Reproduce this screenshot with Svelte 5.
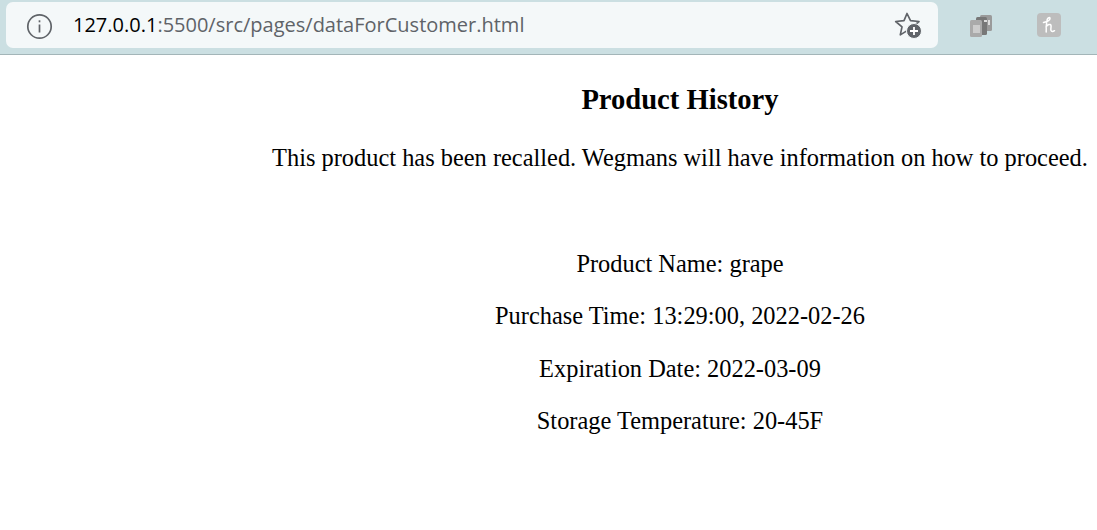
<script>
  const details = [
    'Product Name: grape',
    'Purchase Time: 13:29:00, 2022-02-26',
    'Expiration Date: 2022-03-09',
    'Storage Temperature: 20-45F'
  ];
</script>

<div class="toolbar">
  <div class="omnibox">
    <svg class="info" width="27" height="27" viewBox="0 0 27 27" fill="none" stroke="#5f6368" stroke-width="1.7">
      <circle cx="13.500" cy="13.500" r="11.700" />
      <path d="M13.500 11.500v8" />
      <path d="M13.500 7.300v2" />
    </svg>
    <div class="url"><span class="host">127.0.0.1</span>:5500/src/pages/dataForCustomer.html</div>
    <svg class="star" width="28" height="30" viewBox="0 0 28 30">
      <path d="M13 3.500l3.500 7.200 8.500.8-6.200 5.300 1.800 7.700-7.400-3.900-6.900 4.300 1.700-8.100-6.300-5.300 8.300-.8z" fill="none" stroke="#5f6368" stroke-width="1.700" stroke-linejoin="round" />
      <circle cx="20" cy="21" r="7.500" fill="#5f6368" stroke="#f4f8f9" stroke-width="1" />
      <path d="M16 21h8M20 17v8" stroke="#fff" stroke-width="1.800" />
    </svg>
  </div>
  <div class="extensions">
    <svg class="ext docs" width="24" height="24" viewBox="0 0 24 24">
      <rect x="10" y="1" width="12" height="16" rx="1.500" fill="#9a9a9a" />
      <rect x="6" y="3" width="11" height="18" rx="1.500" fill="#777" />
      <rect x="0" y="6" width="12" height="17" rx="1.500" fill="#aaa" />
      <rect x="3" y="11" width="7" height="8" fill="#ccc" />
      <path d="M14 6h3v2h-3zM18 6h2v5h-2z" fill="#ddd" />
    </svg>
    <svg class="ext" width="24" height="24" viewBox="0 0 24 24">
      <rect width="24" height="24" rx="4" fill="#bdbdbd" />
      <path d="M6.500 9.500c2.500-.5 6.500-2 6.500-4 0-1.500-2.200-1-2.800 1-.8 3.500-1.200 8-1 12.500M9 14c1.500-2.500 4.500-3.500 5-1.500.4 1.800-.6 3.500 0 5 .5 1.300 2 1.200 3.500.2" fill="none" stroke="#fff" stroke-width="1.500" stroke-linecap="round" stroke-linejoin="round" />
    </svg>
  </div>
</div>

<main class="page">
  <h3>Product History</h3>
  <p class="notice">This product has been recalled. Wegmans will have information on how to proceed.</p>
  <div class="details">
    {#each details as line}
      <p>{line}</p>
    {/each}
  </div>
</main>

<style>
  :global(body) {
    margin: 0;
    background: #fff;
    color: #000;
    font-family: "Liberation Serif", "Times New Roman", serif;
  }

  .toolbar {
    display: flex;
    align-items: center;
    height: 55px;
    box-sizing: border-box;
    padding: 1px 0 5px 6px;
    background: #cbdfe2;
    border-bottom: 1px solid #a3b5b8;
  }

  .omnibox {
    display: flex;
    align-items: center;
    width: 932px;
    height: 46px;
    box-sizing: border-box;
    padding: 0 16px 0 20px;
    background: #f4f8f9;
    border-radius: 7px;
  }

  .info {
    flex: none;
    margin-top: 2px;
  }

  .url {
    flex: 1;
    margin-left: 20px;
    padding-bottom: 2px;
    font-family: "Open Sans", "Noto Sans", sans-serif;
    font-size: 20px;
    color: #5f6368;
    white-space: nowrap;
  }

  .host {
    color: #000;
  }

  .star {
    flex: none;
  }

  .extensions {
    display: flex;
    align-items: center;
    gap: 43px;
    margin-left: 31px;
  }

  .ext {
    flex: none;
  }

  .docs {
    margin: 1px 0 0 1px;
  }

  .page {
    padding-left: 263px;
    text-align: center;
    white-space: nowrap;
  }

  h3 {
    margin: 29px 0 0;
    font-size: 28.6px;
    line-height: 32px;
    font-weight: bold;
  }

  p {
    margin: 24px 0;
    font-size: 24.4px;
    line-height: 28.5px;
  }

  .notice {
    margin-top: 28px;
  }

  .details {
    margin-top: 77px;
  }
</style>
